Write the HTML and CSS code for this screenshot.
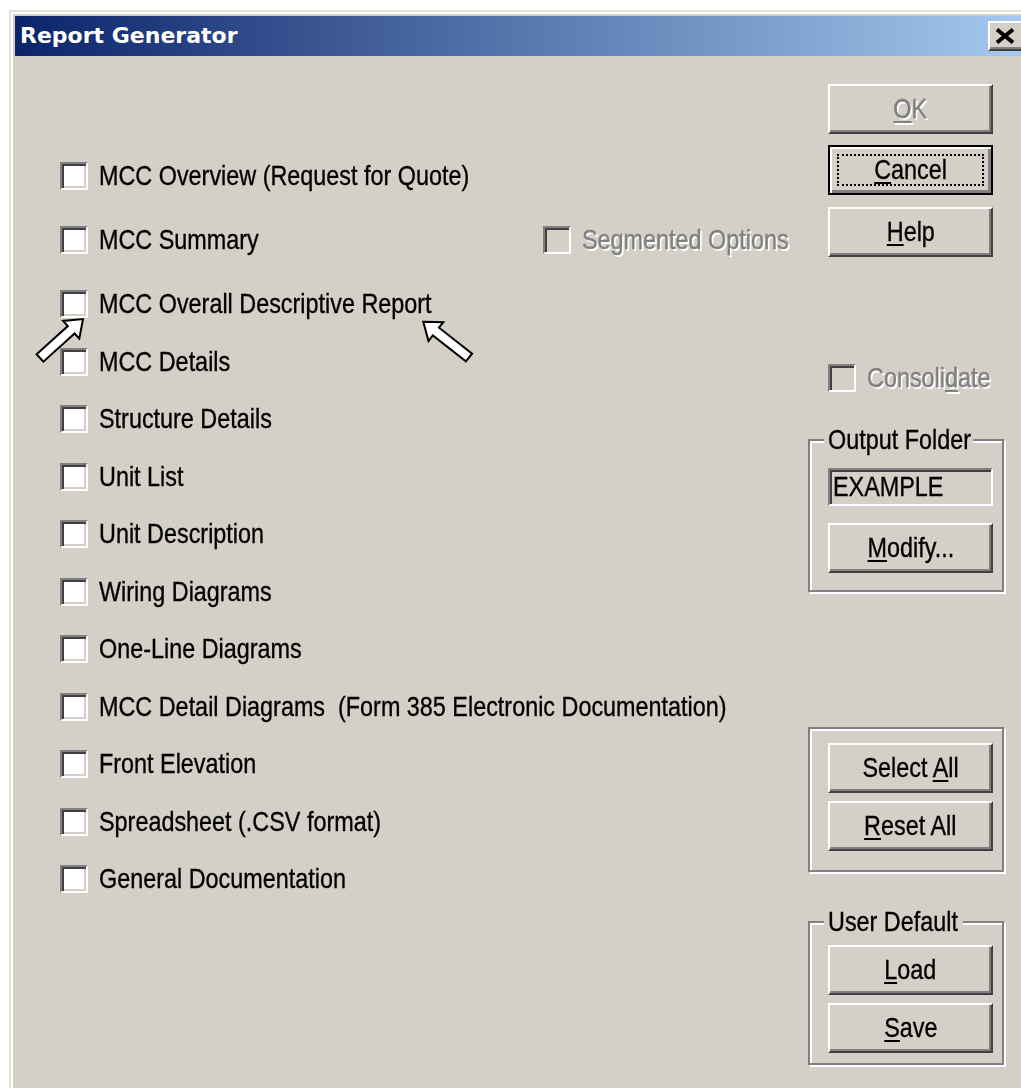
FILE: index.html
```
<!DOCTYPE html>
<html lang="en">
<head>
<meta charset="utf-8">
<title>Report Generator</title>
<link rel="stylesheet" href="styles.css">
</head>
<body>
<div class="window">
  <div class="titlebar">
    <span class="title">Report Generator</span>
    <button class="close" type="button" aria-label="Close">
      <svg width="20" height="16" viewBox="0 0 20 16"><path d="M2 1.5 L18 14.5 M18 1.5 L2 14.5" stroke="#000" stroke-width="4" fill="none"/></svg>
    </button>
  </div>
  <div class="client">
    <div class="reports">
      <div class="row spaced"><label class="check"><span class="box"></span><span class="t">MCC Overview (Request for Quote)</span></label></div>
      <div class="row spaced">
        <label class="check first"><span class="box"></span><span class="t">MCC Summary</span></label>
        <label class="check off"><span class="box"></span><span class="t">Segmented Options</span></label>
      </div>
      <div class="row"><label class="check"><span class="box"></span><span class="t">MCC Overall Descriptive Report</span></label></div>
      <div class="row"><label class="check"><span class="box"></span><span class="t">MCC Details</span></label></div>
      <div class="row"><label class="check"><span class="box"></span><span class="t">Structure Details</span></label></div>
      <div class="row"><label class="check"><span class="box"></span><span class="t">Unit List</span></label></div>
      <div class="row"><label class="check"><span class="box"></span><span class="t">Unit Description</span></label></div>
      <div class="row"><label class="check"><span class="box"></span><span class="t">Wiring Diagrams</span></label></div>
      <div class="row"><label class="check"><span class="box"></span><span class="t">One-Line Diagrams</span></label></div>
      <div class="row"><label class="check"><span class="box"></span><span class="t">MCC Detail Diagrams&nbsp; (Form 385 Electronic Documentation)</span></label></div>
      <div class="row"><label class="check"><span class="box"></span><span class="t">Front Elevation</span></label></div>
      <div class="row"><label class="check"><span class="box"></span><span class="t">Spreadsheet (.CSV format)</span></label></div>
      <div class="row"><label class="check"><span class="box"></span><span class="t">General Documentation</span></label></div>
    </div>

    <div class="side">
      <button class="btn disabled" type="button"><span class="t"><u>O</u>K</span></button>
      <button class="btn default cancel" type="button"><span class="focus"><span class="t"><u>C</u>ancel</span></span></button>
      <button class="btn help" type="button"><span class="t"><u>H</u>elp</span></button>

      <label class="check off consolidate"><span class="box"></span><span class="t">Consoli<u>d</u>ate</span></label>

      <div class="group output">
        <span class="legend"><span class="t">Output Folder</span></span>
        <div class="field"><span class="t">EXAMPLE</span></div>
        <button class="btn modify" type="button"><span class="t"><u>M</u>odify...</span></button>
      </div>

      <div class="group bulk">
        <button class="btn" type="button"><span class="t">Select <u>A</u>ll</span></button>
        <button class="btn stacked" type="button"><span class="t"><u>R</u>eset All</span></button>
      </div>

      <div class="group defaults">
        <span class="legend"><span class="t">User Default</span></span>
        <button class="btn load" type="button"><span class="t"><u>L</u>oad</span></button>
        <button class="btn stacked" type="button"><span class="t"><u>S</u>ave</span></button>
      </div>
    </div>
  </div>
</div>

<svg class="pointers" width="1021" height="1088" viewBox="0 0 1021 1088">
  <polygon points="83,319 79.3,338.6 74.6,333.5 43.4,361.7 36.6,354.3 67.8,326.1 63.1,320.9" />
  <polygon points="423.3,321.7 443.3,322.2 439,327.7 472.1,353.6 465.9,361.4 432.8,335.5 428.5,341" />
</svg>
</body>
</html>
```

FILE: styles.css
```
html,
body {
  margin: 0;
  height: 1088px;
  overflow: hidden;
  background: #fff;
}

body {
  font-family: "Liberation Sans", Arial, sans-serif;
  font-size: 28px;
  color: #000;
}

/* narrow dialog lettering: Liberation Sans condensed horizontally */
.t {
  display: inline-block;
  white-space: nowrap;
  transform: scaleX(0.835);
  transform-origin: 0 50%;
  -webkit-text-stroke-width: 0.35px;
}

.btn .t {
  transform-origin: 50% 50%;
}

u {
  text-decoration-thickness: 2px;
  text-underline-offset: 3px;
}

/* dialog frame */
.window {
  box-sizing: border-box;
  width: 1027px;
  height: 1100px;
  margin: 10px 0 0 9px;
  padding: 6px 6px 0 6px;
  background: #d4d0c8;
  box-shadow: inset 2px 2px 0 #e4e1dc, inset 4px 4px 0 #fff;
}

.titlebar {
  height: 40px;
  display: flex;
  align-items: center;
  justify-content: space-between;
  padding-left: 5px;
  background: linear-gradient(to right, #0a246a, #a6caf0);
}

.title {
  font-family: "DejaVu Sans", sans-serif;
  font-weight: bold;
  font-size: 22px;
  line-height: 40px;
  color: #fff;
}

.close {
  box-sizing: border-box;
  flex: none;
  width: 40px;
  height: 30px;
  margin: 0 2px 0 0;
  padding: 0 0 0 5px;
  display: flex;
  align-items: center;
  background: #d4d0c8;
  border: 2px solid;
  border-color: #fff #404040 #404040 #fff;
  box-shadow: inset -2px -2px 0 #808080;
}

.client {
  display: flex;
}

/* report checkbox list */
.reports {
  box-sizing: border-box;
  flex: none;
  width: 793px;
  padding: 106px 0 0 45px;
  display: flex;
  flex-direction: column;
  gap: 29.5px;
}

.row {
  display: flex;
  align-items: center;
  height: 28px;
}

.row.spaced {
  margin-bottom: 6.5px;
}

.check {
  flex: none;
  display: flex;
  align-items: center;
  gap: 11px;
  line-height: 28px;
  white-space: nowrap;
}

.check.first {
  width: 483px;
}

.box {
  flex: none;
  box-sizing: border-box;
  width: 28px;
  height: 28px;
  border: 2px solid;
  border-color: #808080 #fff #fff #808080;
  box-shadow: inset 2px 2px 0 #404040, inset -2px -2px 0 #d4d0c8;
  background: #fff;
}

.check.off .box {
  background: #d4d0c8;
}

.check.off .t,
.btn.disabled {
  color: #808080;
  text-shadow: 2px 2px 0 #fff;
}

/* right-hand command column */
.side {
  box-sizing: border-box;
  flex: none;
  width: 196px;
  padding-top: 28px;
  display: flex;
  flex-direction: column;
  align-items: flex-start;
}

.btn {
  box-sizing: border-box;
  flex: none;
  width: 165px;
  height: 50px;
  margin: 0 0 0 20px;
  padding: 0;
  font: inherit;
  line-height: 30px;
  color: #000;
  background: #d4d0c8;
  border: 2px solid;
  border-color: #fff #404040 #404040 #fff;
  box-shadow: inset -2px -2px 0 #808080;
  text-align: center;
  white-space: nowrap;
}

.btn.default {
  border-color: #000;
  box-shadow: inset 2px 2px 0 #fff, inset -3px -3px 0 #808080;
  display: flex;
  padding: 7px;
}

.btn.cancel {
  margin-top: 11px;
}

.btn.help {
  margin-top: 12px;
}

.focus {
  flex: 1;
  display: flex;
  align-items: center;
  justify-content: center;
  border: 2px dotted #000;
}

.consolidate {
  margin: 107px 0 0 20px;
}

/* etched group frames */
.group {
  box-sizing: border-box;
  flex: none;
  width: 196px;
  padding: 0 0 17px 18px;
  display: flex;
  flex-direction: column;
  align-items: flex-start;
  border: 2px solid #808080;
  box-shadow: inset 2px 2px 0 #fff, 2px 2px 0 #fff;
}

.group .btn {
  margin-left: 0;
}

.group .btn.stacked {
  margin-top: 8px;
}

.legend {
  box-sizing: border-box;
  margin: -16px 0 0 -4px;
  padding: 0 4px;
  line-height: 30px;
  white-space: nowrap;
  background: #d4d0c8;
}

.output .legend {
  width: 149px;
}

.defaults .legend {
  width: 139px;
}

.group.output {
  margin-top: 47px;
}

.field {
  box-sizing: border-box;
  width: 165px;
  height: 38px;
  margin: 13px 0 0;
  padding: 0 3px;
  line-height: 34px;
  color: #000;
  background: #d4d0c8;
  border: 2px solid;
  border-color: #808080 #fff #fff #808080;
  box-shadow: inset 2px 2px 0 #404040, inset -2px -2px 0 #d4d0c8;
  overflow: hidden;
}

.btn.modify {
  margin-top: 17px;
}

.group.bulk {
  margin-top: 135px;
  padding-top: 14px;
  padding-bottom: 19px;
}

.group.defaults {
  margin-top: 49px;
  padding-bottom: 10px;
}

.btn.load {
  margin-top: 8px;
}

/* callout pointers drawn over the dialog */
.pointers {
  position: absolute;
  left: 0;
  top: 0;
  pointer-events: none;
}

.pointers polygon {
  fill: #fff;
  stroke: #000;
  stroke-width: 2;
  stroke-linejoin: miter;
}
```
